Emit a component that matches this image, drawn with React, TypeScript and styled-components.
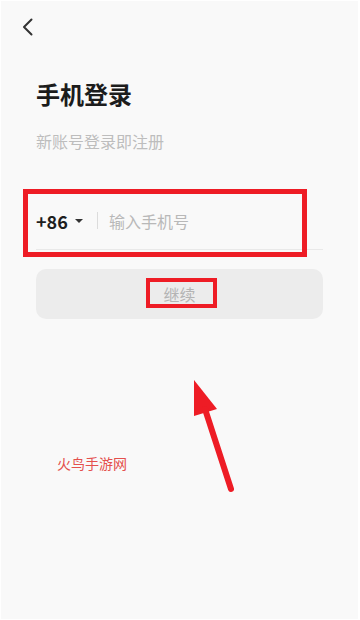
import React from "react";
import styled, { createGlobalStyle } from "styled-components";

const GlobalStyle = createGlobalStyle`
    html, body {
        margin: 0;
        padding: 0;
        background: #ffffff;
        font-family: "Noto Sans CJK SC", "Noto Sans", sans-serif;
    }
`;

const Screen = styled.div`
    position: relative;
    box-sizing: border-box;
    width: 357px;
    height: 618px;
    margin: 1px 2px 1px 1px;
    padding: 0 35px;
    background: #f9f9f9;
    display: flex;
    flex-direction: column;
    overflow: hidden;
`;

const Header = styled.div`
    height: 52px;
    margin-left: -15px;
    display: flex;
    align-items: center;
`;

const BackButton = styled.button`
    border: none;
    background: none;
    padding: 0;
    width: 14px;
    height: 20px;
    display: flex;
    cursor: pointer;
`;

const Title = styled.h1`
    margin: 28px 0 0;
    font-size: 24px;
    line-height: 26px;
    font-weight: 700;
    color: #1c1c1c;
`;

const Subtitle = styled.p`
    margin: 24px 0 0;
    font-size: 16px;
    line-height: 20px;
    color: #bdbdbd;
`;

const Field = styled.div`
    position: relative;
    box-sizing: border-box;
    margin-top: 46px;
    height: 53px;
    padding-bottom: 5px;
    border-bottom: 1px solid #e9e9e9;
    display: flex;
    align-items: center;
`;

const CountryCode = styled.span`
    font-size: 18px;
    font-weight: 700;
    color: #1e1e1e;
    line-height: 20px;
`;

const Caret = styled.span`
    margin-left: 7px;
    width: 0;
    height: 0;
    border-left: 4px solid transparent;
    border-right: 4px solid transparent;
    border-top: 4px solid #333;
`;

const Divider = styled.span`
    margin: 0 11px 0 14px;
    width: 1px;
    height: 17px;
    background: #dcdcdc;
`;

const PhoneInput = styled.input`
    flex: 1;
    border: none;
    outline: none;
    background: transparent;
    padding: 0;
    font-family: inherit;
    font-size: 16px;
    color: #222;

    &::placeholder {
        color: #b8b8b8;
    }
`;

const ContinueButton = styled.button`
    position: relative;
    margin-top: 19px;
    height: 50px;
    border: none;
    border-radius: 10px;
    background: #ececec;
    font-family: inherit;
    font-size: 16px;
    color: #b4b4b4;
`;

const Highlight = styled.div<{ $left: number; $top: number; $w: number; $h: number; $stroke: number }>`
    position: absolute;
    box-sizing: border-box;
    left: ${(p) => p.$left}px;
    top: ${(p) => p.$top}px;
    width: ${(p) => p.$w}px;
    height: ${(p) => p.$h}px;
    border: ${(p) => p.$stroke}px solid #ee1c25;
    pointer-events: none;
`;

const Watermark = styled.div`
    margin: 136px 0 0 21px;
    font-size: 14px;
    line-height: 16px;
    color: #e4504d;
`;

const ArrowMark = styled.svg`
    position: absolute;
    left: 186px;
    top: 372px;
    width: 52px;
    height: 122px;
`;

export default function App() {
    return (
        <>
            <GlobalStyle />
            <Screen>
                <Header>
                    <BackButton aria-label="返回">
                        <svg width="14" height="20" viewBox="0 0 14 20">
                            <path d="M10.5 2.5 L3 10 L10.5 17.5" fill="none" stroke="#333" strokeWidth="2" strokeLinecap="round" strokeLinejoin="round" />
                        </svg>
                    </BackButton>
                </Header>
                <Title>手机登录</Title>
                <Subtitle>新账号登录即注册</Subtitle>
                <Field>
                    <CountryCode>+86</CountryCode>
                    <Caret />
                    <Divider />
                    <PhoneInput placeholder="输入手机号" />
                    <Highlight $left={-13} $top={-8} $w={284} $h={68} $stroke={5} />
                </Field>
                <ContinueButton>
                    继续
                    <Highlight $left={110} $top={9} $w={71} $h={30} $stroke={4} />
                </ContinueButton>
                <Watermark>火鸟手游网</Watermark>
                <ArrowMark viewBox="0 0 52 122">
                    <polygon points="7,7 7,43 30,36" fill="#ee1c25" />
                    <line x1="18" y1="36" x2="44" y2="116" stroke="#ee1c25" strokeWidth="6" strokeLinecap="round" />
                </ArrowMark>
            </Screen>
        </>
    );
}
